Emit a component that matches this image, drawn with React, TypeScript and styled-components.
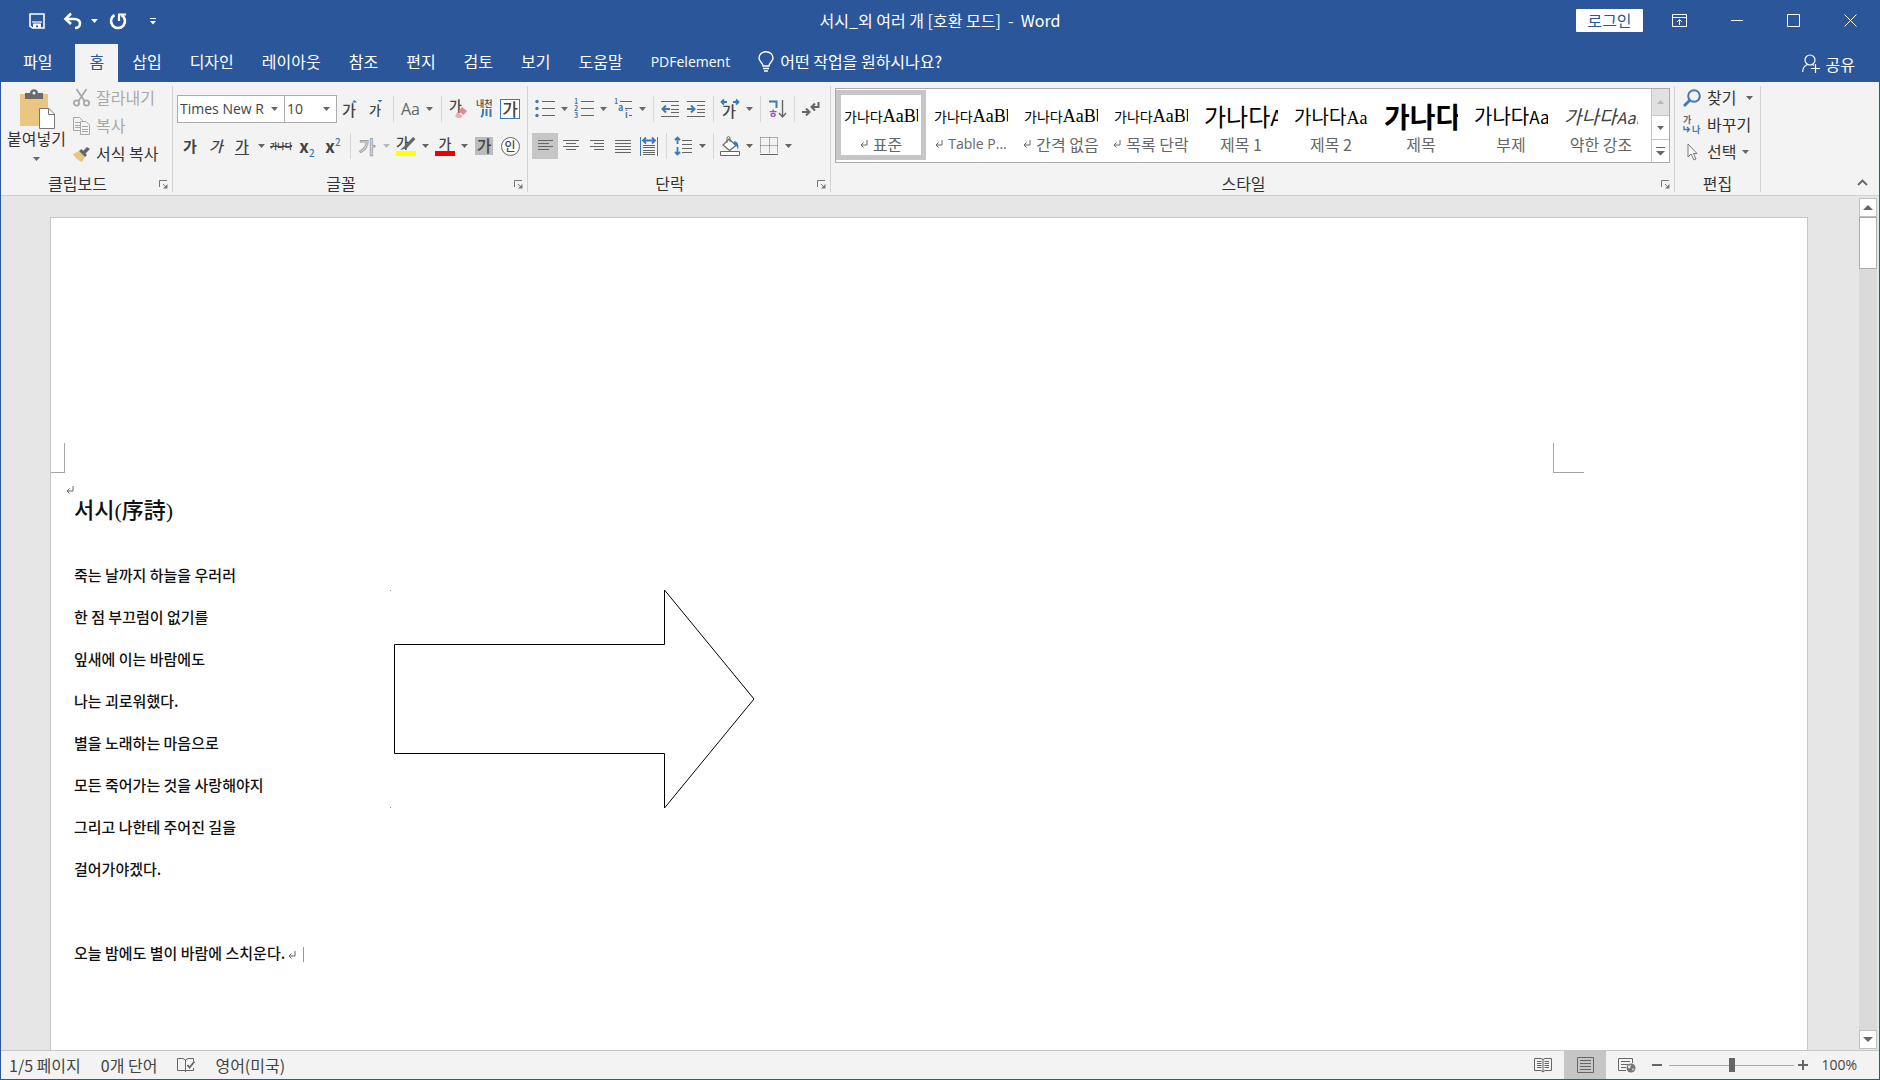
import React from "react";
import styled, { createGlobalStyle, css } from "styled-components";

const ui = `"Noto Sans CJK KR", "Noto Sans", sans-serif`;
const latin = `"Open Sans", "Noto Sans CJK KR", sans-serif`;
const serif = `"Liberation Serif", "Noto Sans CJK KR", serif`;
const blue = "#2b579a";
const ink = "#444444";
const iconGray = "#666666";
const iconBlue = "#3f79b5";

const GlobalStyle = createGlobalStyle`
  *, *::before, *::after { box-sizing: border-box; }
  body { margin: 0; font-family: ${ui}; font-size: 16px; line-height: 20px; color: ${ink}; }
  button, select, input { font: inherit; color: inherit; margin: 0; }
  h1, p { margin: 0; }
  svg { flex: none; overflow: visible; }
`;

const Window = styled.div`
  display: flex;
  flex-direction: column;
  height: 100vh;
  overflow: hidden;
  background: #e6e6e6;
  border: 1px solid ${blue};
  border-top: 0;
`;

const Latin = styled.span`
  font-family: ${latin};
  font-size: 14px;
`;

/* ---------- title bar ---------- */

const TitleBar = styled.header`
  display: grid;
  grid-template-columns: 1fr auto 1fr;
  align-items: center;
  height: 44px;
  padding-bottom: 4px;
  background: ${blue};
  color: #fff;
`;

const QuickAccess = styled.div`
  display: flex;
  align-items: center;
  padding: 2px 0 0 19px;
`;

const PlainButton = styled.button<{ $w?: number }>`
  display: inline-flex;
  align-items: center;
  justify-content: center;
  flex: none;
  width: ${(p) => (p.$w ? `${p.$w}px` : "auto")};
  height: 26px;
  padding: 0;
  border: 0;
  background: transparent;
`;

const TitleText = styled.div`
  white-space: pre;
`;

const WindowControls = styled.div`
  display: flex;
  align-items: center;
  justify-content: flex-end;
`;

const LoginButton = styled.button`
  width: 67px;
  height: 23px;
  margin-right: 8px;
  padding: 0 0 1px;
  border: 0;
  border-radius: 1px;
  background: #fff;
  color: ${blue};
  line-height: 20px;
`;

const WindowButton = styled(PlainButton)`
  width: 57px;
  height: 30px;
`;

/* ---------- tabs ---------- */

const TabBar = styled.nav`
  display: flex;
  align-items: stretch;
  height: 38px;
  padding: 0 20px 0 8px;
  background: ${blue};
  color: #fff;
`;

const Tab = styled.button<{ $active?: boolean; $first?: boolean }>`
  padding: 0 14px 4px;
  border: 0;
  white-space: nowrap;
  background: ${(p) => (p.$active ? "#f3f3f3" : "transparent")};
  color: ${(p) => (p.$active ? blue : "#fff")};
  ${(p) => p.$first && css`margin-right: 9px;`}
`;

const TellMe = styled.button`
  display: flex;
  align-items: center;
  gap: 6px;
  margin-left: 14px;
  padding: 0 0 4px;
  border: 0;
  background: transparent;
`;

const Share = styled(TellMe)`
  margin-left: auto;
  padding: 1px 4px 0 0;
`;

/* ---------- ribbon ---------- */

const Ribbon = styled.div`
  display: flex;
  height: 114px;
  padding: 4px 0 0;
  background: #f3f3f3;
  border-bottom: 1px solid #d0d0d0;
`;

const Group = styled.section<{ $w?: number; $top?: number }>`
  display: flex;
  flex-direction: column;
  flex: ${(p) => (p.$w ? `0 0 ${p.$w}px` : "1 1 0")};
  min-width: 0;
  height: 106px;
  padding: ${(p) => p.$top ?? 10}px 4px 0;
  border-right: 1px solid #d2d2d2;
`;

const GroupFooter = styled.div`
  display: flex;
  align-items: center;
  height: 16px;
  margin-top: auto;
  line-height: 14px;
  color: #333;
`;

const GroupName = styled.span`
  flex: 1;
  padding-bottom: 2px;
  text-align: center;
`;

const LauncherButton = styled.button`
  display: flex;
  justify-content: flex-end;
  width: 18px;
  height: 9px;
  padding: 0;
  border: 0;
  background: transparent;
`;

const Row = styled.div`
  display: flex;
  align-items: center;
  height: 26px;
  & + & { margin-top: 11px; }
`;

const Tool = styled(PlainButton)<{ $on?: boolean }>`
  width: ${(p) => p.$w ?? 26}px;
  background: ${(p) => (p.$on ? "#c6c6c6" : "transparent")};
`;

const CaretButton = styled(PlainButton)`
  width: 13px;
`;

const Sep = styled.span`
  flex: none;
  width: 1px;
  height: 26px;
  margin: 0 3px 0 4px;
  background: #d6d6d6;
`;

const Glyph = styled.span<{ $bold?: boolean; $italic?: boolean; $under?: boolean }>`
  font-size: 15px;
  line-height: 17px;
  font-weight: ${(p) => (p.$bold ? 700 : 500)};
  font-style: ${(p) => (p.$italic ? "italic" : "normal")};
  border-bottom: 1px solid ${(p) => (p.$under ? ink : "transparent")};
`;

const Strike = styled.s`
  font-size: 8px;
  font-weight: 700;
  line-height: 12px;
`;

const Script = styled.span`
  font-size: 17px;
  font-weight: 700;
  line-height: 20px;
  sub, sup { font-size: 10px; font-weight: 500; line-height: 0; color: ${iconBlue}; }
`;

const OutlineGlyph = styled.span`
  font-size: 18px;
  font-weight: 500;
  line-height: 20px;
  color: #f3f3f3;
  -webkit-text-stroke: 1px #a0a0a0;
`;

const AaGlyph = styled.span`
  margin-right: 6px;
  font-family: ${latin};
  font-size: 16px;
  font-weight: 500;
  color: ${iconGray};
`;

const FramedGlyph = styled.span`
  width: 20px;
  height: 20px;
  border: 1px solid ${iconBlue};
  background: #fff;
  font-size: 17px;
  font-weight: 500;
  line-height: 17px;
`;

const ShadedGlyph = styled.span`
  width: 18px;
  height: 18px;
  background: #bcbcbc;
  font-size: 16px;
  font-weight: 500;
  line-height: 17px;
`;

const CircledGlyph = styled.span`
  width: 19px;
  height: 19px;
  border: 1px solid ${iconGray};
  border-radius: 50%;
  background: #fff;
  font-size: 12px;
  font-weight: 500;
  line-height: 16px;
`;

const ColorGlyph = styled.span<{ $color: string }>`
  width: 20px;
  height: 20px;
  border-bottom: 5px solid ${(p) => p.$color};
  font-size: 14px;
  font-weight: 500;
  line-height: 14px;
  white-space: nowrap;
`;

const Combo = styled.label<{ $w: number }>`
  display: grid;
  width: ${(p) => p.$w}px;
  height: 28px;
  background: #fff;
  border: 1px solid #ababab;
  & + & { border-left: 0; }
  > * { grid-area: 1 / 1; }
  > svg { place-self: center end; margin-right: 6px; pointer-events: none; }
`;

const ComboSelect = styled.select`
  appearance: none;
  width: 100%;
  min-width: 0;
  padding: 0 14px 0 2px;
  border: 0;
  background: transparent;
  font-family: ${latin};
  font-size: 14px;
  text-overflow: clip;
`;

/* clipboard */

const ClipboardBody = styled.div`
  display: flex;
  gap: 6px;
`;

const PasteButton = styled.button`
  display: flex;
  flex-direction: column;
  align-items: center;
  width: 62px;
  padding: 1px 0 0 1px;
  border: 0;
  background: transparent;
  line-height: 18px;
  white-space: nowrap;
  color: #333;
  > svg:last-child { margin-top: 10px; }
`;

const Stack = styled.div<{ $pad?: number; $gap: number }>`
  display: flex;
  flex-direction: column;
  gap: ${(p) => p.$gap}px;
  padding-left: ${(p) => p.$pad ?? 0}px;
`;

const LabeledTool = styled.button<{ $muted?: boolean }>`
  display: flex;
  align-items: center;
  gap: 6px;
  height: 24px;
  padding: 0;
  border: 0;
  background: transparent;
  white-space: nowrap;
  color: ${(p) => (p.$muted ? "#a8a8a8" : "#333")};
`;

const ToolLabel = styled.span`
  padding-bottom: 3px;
`;

/* styles gallery */

const Gallery = styled.div`
  display: flex;
  height: 75px;
  border: 1px solid #ababab;
  background: #fff;
`;

const GalleryItems = styled.div`
  display: flex;
  flex: 1;
  min-width: 0;
  overflow: hidden;
`;

const StyleCell = styled.button<{ $on?: boolean }>`
  flex: 0 0 90px;
  min-width: 0;
  height: 70px;
  margin-top: 1px;
  padding: 3px 3px 0;
  border: 5px solid ${(p) => (p.$on ? "#c6c6c6" : "transparent")};
  background: transparent;
`;

const Sample = styled.span<{ $size: number; $latin: number; $sans?: boolean; $bold?: boolean; $italic?: boolean }>`
  display: block;
  height: 34px;
  overflow: hidden;
  text-align: left;
  white-space: nowrap;
  line-height: 32px;
  font-size: ${(p) => p.$size}px;
  font-weight: ${(p) => (p.$bold ? 700 : 400)};
  font-style: ${(p) => (p.$italic ? "italic" : "normal")};
  color: ${(p) => (p.$italic ? "#404040" : "#000")};
  > span {
    font-family: ${(p) => (p.$sans ? ui : serif)};
    font-size: ${(p) => p.$latin}px;
  }
`;

const StyleName = styled.span`
  display: flex;
  align-items: center;
  justify-content: center;
  gap: 5px;
  margin: 0 -6px;
  line-height: 20px;
  white-space: nowrap;
  color: #666;
`;

const GalleryScroll = styled.div`
  display: grid;
  grid-template-rows: 26px 24px 1fr;
  width: 18px;
  border-left: 1px solid #c6c6c6;
`;

const GalleryScrollButton = styled.button<{ $off?: boolean }>`
  display: flex;
  align-items: center;
  justify-content: center;
  padding: 0;
  border: 0;
  background: ${(p) => (p.$off ? "#e1e1e1" : "#fff")};
  & + & { border-top: 1px solid #c6c6c6; }
`;

const RibbonTail = styled.div`
  display: flex;
  flex: 0 0 118px;
  align-items: flex-end;
  justify-content: flex-end;
  padding: 0 4px 0 0;
`;

/* ---------- document ---------- */

const Workspace = styled.main`
  display: flex;
  flex: 1;
  min-height: 0;
`;

const Canvas = styled.div`
  flex: 1;
  min-width: 0;
  overflow: hidden;
  padding: 21px 51px 0 49px;
`;

const Page = styled.article`
  height: 100%;
  padding-top: 225px;
  background: #fff;
  border: 1px solid #c6c6c6;
  border-bottom: 0;
  color: #111;
`;

const MarginMarks = styled.div`
  display: flex;
  justify-content: space-between;
  height: 30px;
  padding-right: 223px;
`;

const Corner = styled.span<{ $side: "left" | "right" }>`
  width: ${(p) => (p.$side === "left" ? 14 : 31)}px;
  border-bottom: 1px solid #a6a6a6;
  border-${(p) => (p.$side === "left" ? "right" : "left")}: 1px solid #a6a6a6;
`;

const PageBody = styled.div`
  display: flex;
  padding-top: 13px;
`;

const Poem = styled.div`
  flex: 0 0 338px;
  padding-left: 23px;
`;

const PoemTitle = styled.h1`
  margin-bottom: 28px;
  font-family: ${serif};
  font-size: 22px;
  font-weight: 500;
  line-height: 30px;
`;

const Verse = styled.p`
  display: flex;
  align-items: center;
  height: 42px;
  font-size: 15px;
  font-weight: 500;
  line-height: 42px;
  white-space: pre;
`;

const FirstMark = styled.div`
  display: flex;
  height: 10px;
  margin-left: -8px;
`;

const EndMark = styled.span`
  display: flex;
  align-items: center;
  gap: 7px;
  padding: 3px 0 0 3px;
`;

const TextCursor = styled.span`
  width: 1px;
  height: 15px;
  background: #999;
`;

const ArrowShape = styled.svg`
  display: block;
  flex: none;
  margin-top: 103px;
`;

const ScrollBar = styled.div`
  display: flex;
  flex-direction: column;
  width: 18px;
  margin: 2px 2px 1px 0;
  background: #dadada;
`;

const ScrollButton = styled.button`
  display: flex;
  align-items: center;
  justify-content: center;
  height: 19px;
  padding: 0;
  border: 1px solid #c0c0c0;
  background: #fff;
  &:last-child { margin-top: auto; }
`;

const ScrollThumb = styled.div`
  height: 52px;
  background: #fff;
  border: 1px solid #ababab;
`;

/* ---------- status bar ---------- */

const StatusBar = styled.footer`
  display: flex;
  align-items: center;
  justify-content: space-between;
  height: 29px;
  padding: 0 22px 0 8px;
  background: #f3f3f3;
  border-top: 1px solid #c6c6c6;
`;

const StatusInfo = styled.div`
  display: flex;
  align-items: center;
  gap: 20px;
  padding-bottom: 1px;
`;

const StatusTools = styled.div`
  display: flex;
  align-items: center;
  height: 28px;
`;

const ViewButton = styled(PlainButton)<{ $on?: boolean }>`
  width: 42px;
  height: 28px;
  background: ${(p) => (p.$on ? "#c6c6c6" : "transparent")};
`;

const ZoomSlider = styled.input`
  appearance: none;
  width: 125px;
  height: 16px;
  margin: 0 4px 0 3px;
  background: linear-gradient(#ababab, #ababab) center / 100% 1px no-repeat;
  &::-webkit-slider-thumb {
    appearance: none;
    width: 6px;
    height: 14px;
    background: #666;
  }
`;

const ZoomValue = styled(Latin)`
  width: 49px;
  text-align: right;
`;

/* ---------- small drawings ---------- */

const Caret = ({ color = iconGray, up = false }: { color?: string; up?: boolean }) => (
  <svg width="7" height="4" viewBox="0 0 7 4" fill={color}>
    <path d={up ? "M0 4L3.500 0L7 4Z" : "M0 0H7L3.500 4Z"} />
  </svg>
);

const ReturnMark = ({ color = "#666" }: { color?: string }) => (
  <svg width="8" height="8" viewBox="0 0 8 8" fill="none" stroke={color}>
    <path d="M7 0V5H1M3.500 2.500L1 5L3.500 7.500" />
  </svg>
);

const Launcher = ({ label }: { label: string }) => (
  <LauncherButton aria-label={label}>
    <svg width="9" height="9" viewBox="0 0 9 9" fill="none" stroke="#777">
      <path d="M.5 7V.5H8M4 4L7.500 7.500" />
      <path d="M8.500 4V8.500H4Z" fill="#777" stroke="none" />
    </svg>
  </LauncherButton>
);

const Lines = ({ rows }: { rows: [number, number][] }) => (
  <svg width="18" height="18" viewBox="0 0 18 18" stroke={iconGray}>
    {rows.map(([a, b], i) => (
      <path key={i} d={`M${a} ${3.5 + i * 3}H${b}`} />
    ))}
  </svg>
);

const listText = { fontSize: 7, fontWeight: 700, fill: iconBlue, stroke: "none" };

const Bullets = () => (
  <svg width="20" height="20" viewBox="0 0 20 20" stroke={iconGray}>
    <path d="M7 2.500H20M7 9.500H20M7 16.500H20" />
    <g fill={iconBlue} stroke="none">
      <circle cx="2" cy="2.500" r="1.700" /><circle cx="2" cy="9.500" r="1.700" /><circle cx="2" cy="16.500" r="1.700" />
    </g>
  </svg>
);

const Numbering = () => (
  <svg width="20" height="20" viewBox="0 0 20 20" stroke={iconGray}>
    <path d="M7 2.500H20M7 9.500H20M7 16.500H20" />
    <text x="0" y="5" {...listText}>1</text><text x="0" y="12" {...listText}>2</text><text x="0" y="19" {...listText}>3</text>
  </svg>
);

const Multilevel = () => (
  <svg width="20" height="20" viewBox="0 0 20 20" stroke={iconGray}>
    <path d="M7 2.500H19M12 9.500H19M16 16.500H19" />
    <text x="1" y="5" {...listText}>1</text><text x="5" y="12" {...listText} fontSize={9}>a</text><text x="12" y="19" {...listText} fontSize={9}>i</text>
  </svg>
);

const Indent = ({ out }: { out?: boolean }) => (
  <svg width="18" height="18" viewBox="0 0 18 18" fill="none" stroke={iconGray}>
    <path d="M0 1.500H18M10 5.500H18M10 9.500H18M10 12.500H18M0 16.500H18" />
    <path d={out ? "M9 9H2M5 5.500L1.500 9L5 12.500" : "M0 9H7M4 5.500L7.500 9L4 12.500"} stroke={iconBlue} strokeWidth="2" />
  </svg>
);

const sampleStyles: {
  name: string; mark?: boolean; latinName?: boolean; size: number; latin: number; text: string; sans?: boolean; bold?: boolean; italic?: boolean;
}[] = [
  { name: "표준", mark: true, size: 14, latin: 18, text: "AaBb" },
  { name: "Table P...", mark: true, latinName: true, size: 14, latin: 18, text: "AaBb" },
  { name: "간격 없음", mark: true, size: 14, latin: 18, text: "AaBb" },
  { name: "목록 단락", mark: true, size: 14, latin: 18, text: "AaBb" },
  { name: "제목 1", size: 24, latin: 22, text: "A", sans: true },
  { name: "제목 2", size: 19, latin: 18, text: "Aa" },
  { name: "제목", size: 28, latin: 28, text: "", sans: true, bold: true },
  { name: "부제", size: 20, latin: 17, text: "Aa", sans: true },
  { name: "약한 강조", size: 19, latin: 16, text: "AaB", sans: true, italic: true },
];

const tabs = ["삽입", "디자인", "레이아웃", "참조", "편지", "검토", "보기", "도움말"];

const verses = [
  "죽는 날까지 하늘을 우러러",
  "한 점 부끄럼이 없기를",
  "잎새에 이는 바람에도",
  "나는 괴로워했다.",
  "별을 노래하는 마음으로",
  "모든 죽어가는 것을 사랑해야지",
  "그리고 나한테 주어진 길을",
  "걸어가야겠다.",
  "",
];

const Menu = ({ label, muted }: { label: string; muted?: boolean }) => (
  <CaretButton aria-label={label}><Caret color={muted ? "#b8b8b8" : iconGray} /></CaretButton>
);

function TitleSection() {
  return (
    <TitleBar>
      <QuickAccess>
        <PlainButton $w={34} aria-label="저장">
          <svg width="16" height="16" viewBox="0 0 16 16" fill="none" stroke="#fff" strokeWidth="1.600">
            <path d="M1 1H15V15H3.500L1 13Z" />
            <path d="M3 9H13" strokeWidth="1.200" /><path d="M4 10.500H12V15H9V12.500H7V15H4Z" fill="#fff" stroke="none" />
          </svg>
        </PlainButton>
        <PlainButton $w={37} aria-label="실행 취소">
          <svg width="20" height="18" viewBox="0 0 20 18" fill="none" stroke="#fff" strokeWidth="2.600">
            <path d="M3 7H11.500C15 7 17 9 17 11.500S15 16 12 16" /><path d="M8 1.500L2.500 7L8 12" />
          </svg>
        </PlainButton>
        <Caret color="#fff" />
        <PlainButton $w={40} aria-label="다시 실행">
          <svg width="18" height="18" viewBox="0 0 18 18" fill="none" stroke="#fff" strokeWidth="2.600">
            <path d="M5.500 3A7 7 0 1 0 12.500 3" /><path d="M10 9V2.500H17" strokeWidth="2.200" />
          </svg>
        </PlainButton>
        <PlainButton $w={30} aria-label="빠른 실행 도구 모음 사용자 지정">
          <svg width="6" height="7" viewBox="0 0 6 7" fill="#fff"><path d="M0 0H6V1H0ZM0 3H6L3 6.500Z" /></svg>
        </PlainButton>
      </QuickAccess>
      <TitleText>서시_외 여러 개 [호환 모드]  -  Word</TitleText>
      <WindowControls>
        <LoginButton>로그인</LoginButton>
        <WindowButton aria-label="리본 메뉴 표시 옵션">
          <svg width="15" height="13" viewBox="0 0 15 13" fill="none" stroke="#fff">
            <path d="M.5 .5H14.500V12.500H.5ZM.5 3.500H14.500M7.500 11V5.500M5 8L7.500 5.500L10 8" />
          </svg>
        </WindowButton>
        <WindowButton aria-label="최소화"><svg width="12" height="12" stroke="#fff"><path d="M0 6.500H12" /></svg></WindowButton>
        <WindowButton aria-label="최대화"><svg width="13" height="13" fill="none" stroke="#fff"><path d="M.5 .5H12.500V12.500H.5Z" /></svg></WindowButton>
        <WindowButton aria-label="닫기"><svg width="13" height="13" stroke="#fff"><path d="M.5 .5L12.500 12.500M12.500 .5L.5 12.500" /></svg></WindowButton>
      </WindowControls>
    </TitleBar>
  );
}

function Tabs() {
  return (
    <TabBar>
      <Tab $first>파일</Tab>
      <Tab $active>홈</Tab>
      {tabs.map((t) => <Tab key={t}>{t}</Tab>)}
      <Tab><Latin>PDFelement</Latin></Tab>
      <TellMe>
        <svg width="16" height="21" viewBox="0 0 16 21" fill="none" stroke="#fff" strokeWidth="1.400">
          <path d="M5 15C5 11.500 1 11 1 7A7 6.300 0 0 1 15 7C15 11 11 11.500 11 15ZM5 17.500H11M6 20H10" />
        </svg>
        어떤 작업을 원하시나요?
      </TellMe>
      <Share>
        <svg width="18" height="19" viewBox="0 0 18 19" fill="none" stroke="#fff" strokeWidth="1.200">
          <circle cx="8" cy="6" r="5" /><path d="M.7 18C.7 13.500 3 11.500 5.500 10.500M10.500 10.500L12 11.500M9 14.500H18M13.500 10V19" />
        </svg>
        공유
      </Share>
    </TabBar>
  );
}

function ClipboardGroup() {
  return (
    <Group $w={172} $top={0}>
      <ClipboardBody>
        <PasteButton>
          <svg width="36" height="42" viewBox="0 0 36 42">
            <path d="M1 7H29V39H1Z" fill="#ebc680" />
            <path d="M6 12V6H11C11 1 19 1 19 6H24V12Z" fill="#6b6b6b" /><circle cx="15" cy="6" r="1.500" fill="#f3f3f3" />
            <path d="M20.500 21.500H30L35.500 27V41.500H20.500Z" fill="#fff" stroke="#777" /><path d="M29.500 21.500V27.500H35.500" fill="none" stroke="#777" />
          </svg>
          붙여넣기
          <Caret />
        </PasteButton>
        <Stack $gap={4}>
          <LabeledTool $muted>
            <svg width="17" height="18" viewBox="0 0 17 18" fill="none" stroke="#a8a8a8" strokeWidth="1.800">
              <path d="M3.500 0L11.500 12M13.500 0L5.500 12" /><circle cx="3.500" cy="14" r="2.600" /><circle cx="13.500" cy="14" r="2.600" />
            </svg>
            <ToolLabel>잘라내기</ToolLabel>
          </LabeledTool>
          <LabeledTool $muted>
            <svg width="17" height="18" viewBox="0 0 17 18" fill="#f3f3f3" stroke="#a8a8a8">
              <path d="M.5 .5H6.500L9.500 3.500V13.500H.5ZM2 5.500H7M2 8.500H7M2 10.500H7" />
              <path d="M7.500 4.500H13L16.500 8V17.500H7.500ZM9 9.500H15M9 12.500H15M9 14.500H15" />
            </svg>
            <ToolLabel>복사</ToolLabel>
          </LabeledTool>
          <LabeledTool>
            <svg width="17" height="15" viewBox="0 0 17 15">
              <path d="M0 7L6 4L12 10L9 15Q3 13 0 7Z" fill="#ebc680" />
              <path d="M6 4L8.500 2L14 8L12 10ZM10 4L14 0L17 2L12.500 6.500Z" fill="#666" />
            </svg>
            <ToolLabel>서식 복사</ToolLabel>
          </LabeledTool>
        </Stack>
      </ClipboardBody>
      <GroupFooter><GroupName>클립보드</GroupName><Launcher label="클립보드 옵션" /></GroupFooter>
    </Group>
  );
}

function FontGroup() {
  return (
    <Group $w={355}>
      <Row>
        <Combo $w={108}><ComboSelect aria-label="글꼴"><option>Times New R</option></ComboSelect><Caret /></Combo>
        <Combo $w={52}><ComboSelect aria-label="글꼴 크기"><option>10</option></ComboSelect><Caret /></Combo>
        <Tool aria-label="글꼴 크기 크게">
          <svg width="18" height="20" viewBox="0 0 18 20" fill={ink}>
            <text x="1" y="17" fontSize="15" fontWeight="500">가</text><path d="M11 3.500L13.500 1L16 3.500Z" fill={iconBlue} />
          </svg>
        </Tool>
        <Tool aria-label="글꼴 크기 작게">
          <svg width="18" height="20" viewBox="0 0 18 20" fill={ink}>
            <text x="2" y="16" fontSize="13" fontWeight="500">가</text><path d="M10.500 1H15.500L13 3.500Z" fill={iconBlue} />
          </svg>
        </Tool>
        <Sep />
        <Tool $w={40} aria-label="대/소문자 바꾸기"><AaGlyph>Aa</AaGlyph><Caret /></Tool>
        <Sep />
        <Tool aria-label="서식 지우기">
          <svg width="20" height="20" viewBox="0 0 20 20" fill={ink}>
            <text x="1" y="12" fontSize="14" fontWeight="500">가</text>
            <path d="M14 8L19 12L15.500 16L10.500 12Z" fill="#e58596" /><path d="M9.500 13L14.500 17L12.500 19H9.500L7 17Z" fill="#f0a9b5" />
          </svg>
        </Tool>
        <Tool aria-label="윗주 달기">
          <svg width="18" height="20" viewBox="0 0 18 20" fill={ink}>
            <text x="1" y="8" fontSize="9" fontWeight="500">내천</text>
            <path d="M8 10V13Q8 17 6 18M11.500 10V17M15.500 10V18" fill="none" stroke={iconBlue} strokeWidth="2" />
          </svg>
        </Tool>
        <Tool aria-label="문자 테두리"><FramedGlyph>가</FramedGlyph></Tool>
      </Row>
      <Row>
        <Tool aria-label="굵게"><Glyph $bold>가</Glyph></Tool>
        <Tool aria-label="기울임꼴"><Glyph $italic>가</Glyph></Tool>
        <Tool aria-label="밑줄"><Glyph $under>가</Glyph></Tool>
        <Menu label="밑줄 종류" />
        <Tool aria-label="취소선"><Strike>가나다</Strike></Tool>
        <Tool aria-label="아래 첨자"><Script>x<sub>2</sub></Script></Tool>
        <Tool aria-label="위 첨자"><Script>x<sup>2</sup></Script></Tool>
        <Sep />
        <Tool aria-label="텍스트 효과"><OutlineGlyph>가</OutlineGlyph></Tool>
        <Menu label="텍스트 효과 종류" muted />
        <Tool aria-label="텍스트 강조 색">
          <svg width="20" height="20" viewBox="0 0 20 20" fill={ink}>
            <path d="M0 15H20V20H0Z" fill="#ffff00" /><text x="0" y="12" fontSize="14" fontWeight="500">가</text>
            <path d="M17 1L19.500 3L11 12L8 10.500ZM8 10.500L10.500 12.500L4 14Z" fill="#666" />
          </svg>
        </Tool>
        <Menu label="강조 색 선택" />
        <Tool aria-label="글꼴 색"><ColorGlyph $color="#ee0000">가</ColorGlyph></Tool>
        <Menu label="글꼴 색 선택" />
        <Tool aria-label="문자 음영"><ShadedGlyph>가</ShadedGlyph></Tool>
        <Tool aria-label="원 문자"><CircledGlyph>인</CircledGlyph></Tool>
      </Row>
      <GroupFooter><GroupName>글꼴</GroupName><Launcher label="글꼴 옵션" /></GroupFooter>
    </Group>
  );
}

function ParagraphGroup() {
  return (
    <Group $w={303}>
      <Row>
        <Tool aria-label="글머리 기호"><Bullets /></Tool><Menu label="글머리 기호 종류" />
        <Tool aria-label="번호 매기기"><Numbering /></Tool><Menu label="번호 종류" />
        <Tool aria-label="다단계 목록"><Multilevel /></Tool><Menu label="다단계 목록 종류" />
        <Sep />
        <Tool aria-label="내어쓰기"><Indent out /></Tool>
        <Tool aria-label="들여쓰기"><Indent /></Tool>
        <Sep />
        <Tool aria-label="문자 모양">
          <svg width="20" height="20" viewBox="0 0 20 20" fill={ink}>
            <text x="2" y="18" fontSize="15" fontWeight="500">가</text>
            <path d="M1 3H7M13 3H19M4 .5L1.500 3L4 5.500M16 .5L18.500 3L16 5.500" fill="none" stroke={iconBlue} strokeWidth="1.800" />
          </svg>
        </Tool>
        <Menu label="문자 모양 종류" />
        <Sep />
        <Tool aria-label="정렬">
          <svg width="18" height="20" viewBox="0 0 18 20" fontWeight="700">
            <path d="M1 2.500H8.500V9" fill="none" stroke={iconBlue} strokeWidth="2" />
            <text x="0" y="19" fontSize="11" fill="#9a57b5">ㅎ</text>
            <path d="M14.500 1V18M11 14L14.500 18L18 14" fill="none" stroke={iconGray} strokeWidth="1.400" />
          </svg>
        </Tool>
        <Sep />
        <Tool aria-label="편집 기호 표시">
          <svg width="18" height="16" viewBox="0 0 18 16" fill="none" stroke={iconGray} strokeWidth="2">
            <path d="M16.500 1V6H10M13 2.500L9.500 6L13 9.500M0 11H7M4 7.500L7.500 11L4 14.500" />
          </svg>
        </Tool>
      </Row>
      <Row>
        <Tool $on aria-label="왼쪽 맞춤"><Lines rows={[[2, 17], [2, 13], [2, 17], [2, 13]]} /></Tool>
        <Tool aria-label="가운데 맞춤"><Lines rows={[[1, 17], [4, 14], [1, 17], [4, 14]]} /></Tool>
        <Tool aria-label="오른쪽 맞춤"><Lines rows={[[2, 16], [6, 16], [2, 16], [6, 16]]} /></Tool>
        <Tool aria-label="양쪽 맞춤"><Lines rows={[[1, 17], [1, 17], [1, 17], [1, 17], [1, 17]]} /></Tool>
        <Tool aria-label="균등 분할">
          <svg width="18" height="20" viewBox="0 0 18 20" fill="none" stroke={iconGray}>
            <path d="M3 9.500H15M3 11.500H15M3 14.500H15M3 16.500H15M3 18.500H15" />
            <path d="M.5 1V20M17.500 1V20" stroke={iconBlue} />
            <path d="M3 4.500H15M6 1.500L3 4.500L6 7.500M12 1.500L15 4.500L12 7.500" stroke={iconBlue} strokeWidth="1.800" />
          </svg>
        </Tool>
        <Sep />
        <Tool aria-label="줄 간격">
          <svg width="18" height="20" viewBox="0 0 18 20" fill="none" stroke={iconGray}>
            <path d="M8 4.500H18M8 8.500H18M8 12.500H18M8 16.500H18" />
            <path d="M3.500 1.500V8M1 4L3.500 1.500L6 4M3.500 11V18.500M1 16L3.500 18.500L6 16" stroke={iconBlue} strokeWidth="1.800" />
          </svg>
        </Tool>
        <Menu label="줄 간격 종류" />
        <Sep />
        <Tool aria-label="음영">
          <svg width="20" height="20" viewBox="0 0 20 20" fill="#fff" stroke={iconGray}>
            <path d="M.5 15.500H19.500V19.500H.5Z" /><path d="M9 3L16 9.500L9.500 14.500L3 9Z" strokeWidth="1.200" />
            <path d="M7 7V2.500Q7 .5 8.500 .5T10 2.500V6" fill="none" /><path d="M14 5Q20 6 18 14Q17 9 14 9Z" fill={iconBlue} stroke="none" />
          </svg>
        </Tool>
        <Menu label="음영 색" />
        <Tool aria-label="테두리">
          <svg width="18" height="18" viewBox="0 0 18 18" fill="none" stroke={iconGray}>
            <path d="M.5 .5H17.500V16M.5 .5V16M9.500 .5V16M.5 8.500H17.500" strokeDasharray="1 1" /><path d="M0 17.500H18" />
          </svg>
        </Tool>
        <Menu label="테두리 종류" />
      </Row>
      <GroupFooter><GroupName>단락</GroupName><Launcher label="단락 옵션" /></GroupFooter>
    </Group>
  );
}

function StylesGroup() {
  return (
    <Group $top={2}>
      <Gallery>
        <GalleryItems>
          {sampleStyles.map((s, i) => (
            <StyleCell key={s.name} $on={i === 0}>
              <Sample $size={s.size} $latin={s.latin} $sans={s.sans} $bold={s.bold} $italic={s.italic}>
                가나다<span>{s.text}</span>
              </Sample>
              <StyleName>
                {s.mark && <ReturnMark />}
                {s.latinName ? <Latin>{s.name}</Latin> : s.name}
              </StyleName>
            </StyleCell>
          ))}
        </GalleryItems>
        <GalleryScroll>
          <GalleryScrollButton $off aria-label="위로"><Caret up color="#b8b8b8" /></GalleryScrollButton>
          <GalleryScrollButton aria-label="아래로"><Caret /></GalleryScrollButton>
          <GalleryScrollButton aria-label="자세히">
            <svg width="9" height="9" viewBox="0 0 9 9" fill={iconGray}><path d="M0 0H9V1H0ZM0 4H9L4.500 8.500Z" /></svg>
          </GalleryScrollButton>
        </GalleryScroll>
      </Gallery>
      <GroupFooter><GroupName>스타일</GroupName><Launcher label="스타일 옵션" /></GroupFooter>
    </Group>
  );
}

function EditGroup() {
  return (
    <Group $w={86} $top={0}>
      <Stack $gap={3} $pad={4}>
        <LabeledTool>
          <svg width="18" height="18" viewBox="0 0 18 18" fill="none" stroke={iconBlue} strokeWidth="2">
            <circle cx="11" cy="7" r="5.800" /><path d="M7 11L1 17" strokeWidth="2.800" />
          </svg>
          <ToolLabel>찾기&nbsp;</ToolLabel><Caret />
        </LabeledTool>
        <LabeledTool>
          <svg width="18" height="20" viewBox="0 0 18 20" fontWeight="700">
            <text x="0" y="8" fontSize="9" fill={iconGray}>가</text><text x="9" y="18" fontSize="9" fill={iconBlue}>나</text>
            <path d="M1 11V14.500H6M4 12L6.500 14.500L4 17" fill="none" stroke={iconBlue} strokeWidth="1.300" />
          </svg>
          <ToolLabel>바꾸기</ToolLabel>
        </LabeledTool>
        <LabeledTool>
          <svg width="18" height="18" viewBox="0 0 18 18" fill="#fff" stroke="#777">
            <path d="M5 1V14L8 11L11 17L13 16L10.500 10.500H14Z" />
          </svg>
          <ToolLabel>선택</ToolLabel><Caret />
        </LabeledTool>
      </Stack>
      <GroupFooter><GroupName>편집</GroupName></GroupFooter>
    </Group>
  );
}

function Document() {
  return (
    <Workspace>
      <Canvas>
        <Page>
          <MarginMarks><Corner $side="left" /><Corner $side="right" /></MarginMarks>
          <PageBody>
            <Poem>
              <FirstMark><ReturnMark /></FirstMark>
              <PoemTitle>서시(序詩)</PoemTitle>
              {verses.map((v, i) => <Verse key={i}>{v}</Verse>)}
              <Verse>오늘 밤에도 별이 바람에 스치운다.<EndMark><ReturnMark /><TextCursor /></EndMark></Verse>
            </Poem>
            <ArrowShape width="367" height="220" viewBox="0 0 367 220" fill="none" stroke="#000">
              <path d="M5.500 55.500H275.500V1L365 110L275.500 219V164.500H5.500Z" />
              <path d="M1 1.500H2M1 218.500H2" stroke="#888" />
            </ArrowShape>
          </PageBody>
        </Page>
      </Canvas>
      <ScrollBar>
        <ScrollButton aria-label="위로 스크롤"><svg width="10" height="5" fill={iconGray}><path d="M0 5L5 0L10 5Z" /></svg></ScrollButton>
        <ScrollThumb />
        <ScrollButton aria-label="아래로 스크롤"><svg width="10" height="5" fill={iconGray}><path d="M0 0H10L5 5Z" /></svg></ScrollButton>
      </ScrollBar>
    </Workspace>
  );
}

function Status() {
  return (
    <StatusBar>
      <StatusInfo>
        <span>1/5 페이지</span>
        <span>0개 단어</span>
        <svg width="18" height="16" viewBox="0 0 18 16" fill="none" stroke={iconGray}>
          <path d="M8.500 13.500H.5V1.500H6L8.500 3V15M8.500 3L11 1.500H16.500V4M8.500 13.500H16.500V11" />
          <path d="M10.500 8L12.500 10.500L17.500 4.500" strokeWidth="1.800" />
        </svg>
        <span>영어(미국)</span>
      </StatusInfo>
      <StatusTools>
        <ViewButton aria-label="읽기 모드">
          <svg width="18" height="16" viewBox="0 0 18 16" fill="none" stroke={iconGray}>
            <path d="M.5 1.500H7L9 2.500L11 1.500H17.500V13.500H11L9 15L7 13.500H.5ZM9 2.500V15M3 4.500H7.500M3 6.500H7.500M3 8.500H7.500M3 10.500H7.500M10.500 4.500H15M10.500 6.500H15M10.500 8.500H15M10.500 10.500H15" />
          </svg>
        </ViewButton>
        <ViewButton $on aria-label="인쇄 모양">
          <svg width="17" height="16" viewBox="0 0 17 16" fill="none" stroke={iconGray}>
            <path d="M.5 .5H16.500V15.500H.5ZM3 3.500H14M3 6.500H14M3 9.500H14M3 12.500H14" />
          </svg>
        </ViewButton>
        <ViewButton aria-label="웹 모양">
          <svg width="18" height="16" viewBox="0 0 18 16" fill="none" stroke={iconGray}>
            <path d="M8 13.500H.5V1.500H14.500V6M3 4.500H12M3 7.500H10M3 10.500H8" />
            <circle cx="13" cy="11" r="4.500" fill="#777" stroke="none" /><path d="M10 9L13 8L12 11L10.500 11.500ZM14 12L16 11L15 14Z" fill="#f3f3f3" stroke="none" />
          </svg>
        </ViewButton>
        <PlainButton $w={18} aria-label="축소"><svg width="10" height="10" fill={iconGray}><path d="M0 4H10V6H0Z" /></svg></PlainButton>
        <ZoomSlider type="range" aria-label="확대/축소" min={0} max={100} defaultValue={50} />
        <PlainButton $w={10} aria-label="확대"><svg width="10" height="10" fill={iconGray}><path d="M0 4H4V0H6V4H10V6H6V10H4V6H0Z" /></svg></PlainButton>
        <ZoomValue>100%</ZoomValue>
      </StatusTools>
    </StatusBar>
  );
}

export default function App() {
  return (
    <>
      <GlobalStyle />
      <Window>
        <TitleSection />
        <Tabs />
        <Ribbon>
          <ClipboardGroup />
          <FontGroup />
          <ParagraphGroup />
          <StylesGroup />
          <EditGroup />
          <RibbonTail>
            <PlainButton $w={26} aria-label="리본 메뉴 축소">
              <svg width="11" height="7" viewBox="0 0 11 7" fill="none" stroke={iconGray} strokeWidth="1.800"><path d="M1 6L5.500 1.500L10 6" /></svg>
            </PlainButton>
          </RibbonTail>
        </Ribbon>
        <Document />
        <Status />
      </Window>
    </>
  );
}
